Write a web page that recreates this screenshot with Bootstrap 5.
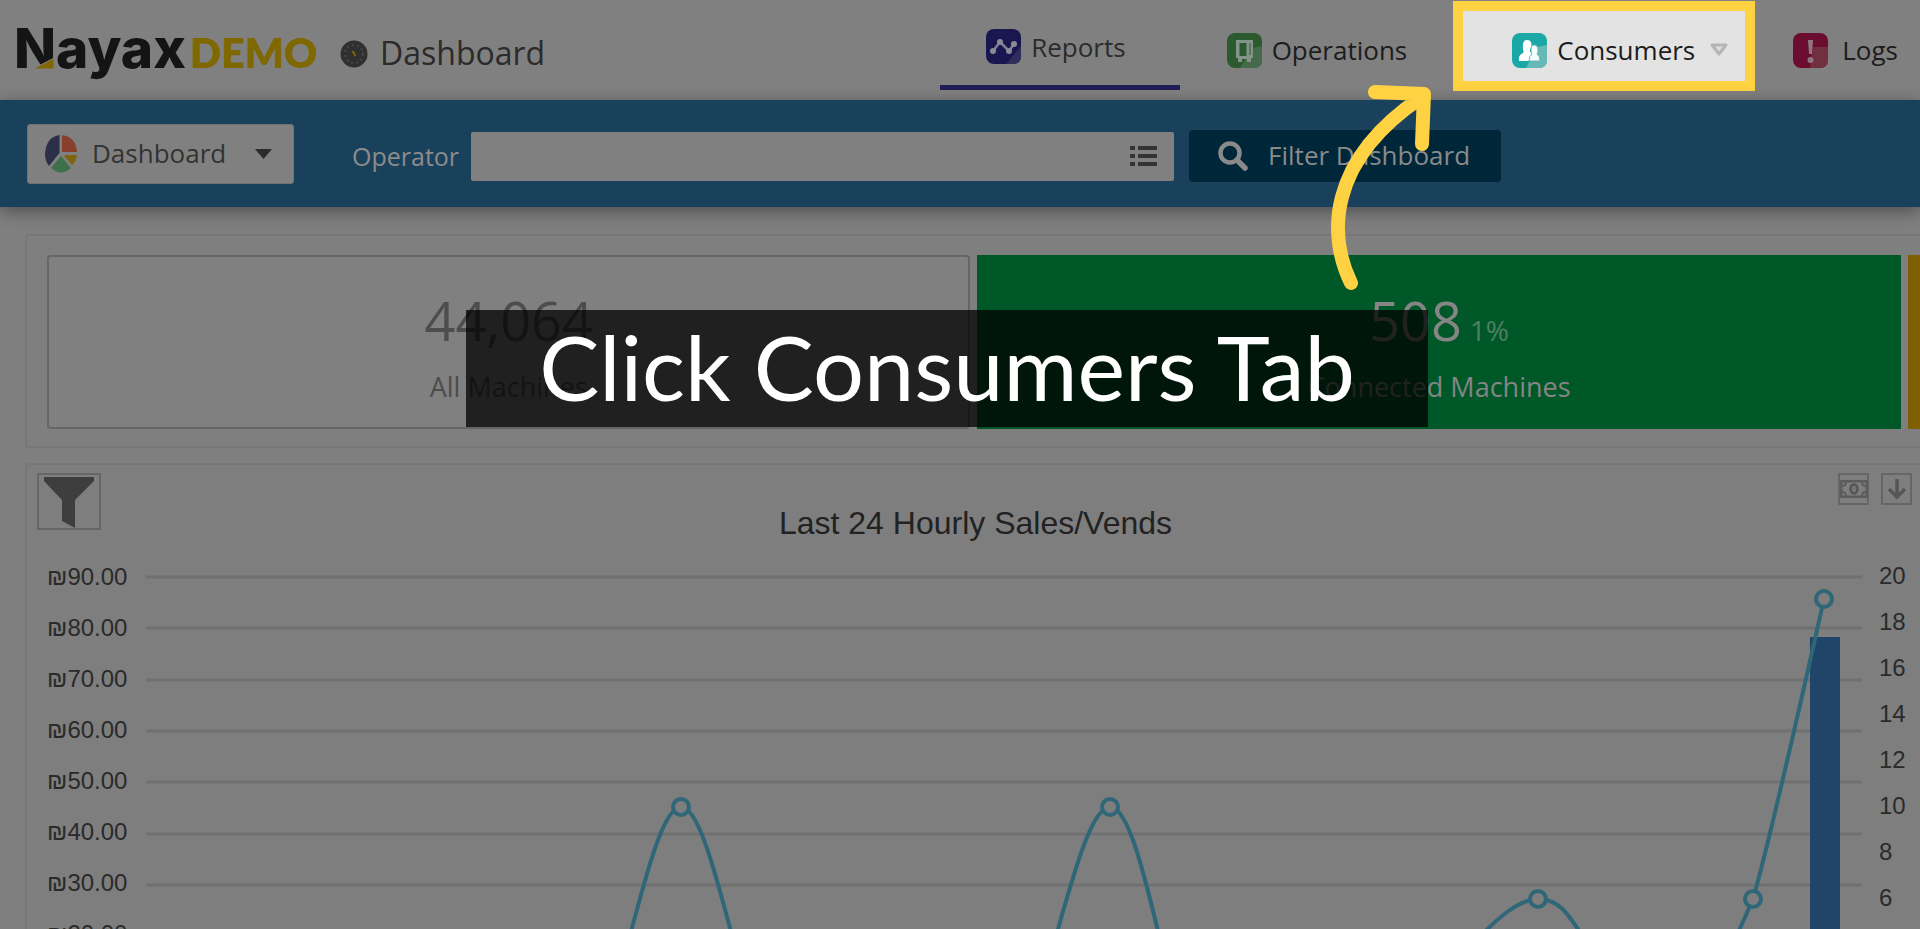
<!DOCTYPE html>
<html lang="en">
<head>
<meta charset="utf-8">
<meta name="viewport" content="width=device-width, initial-scale=1">
<title>Nayax Demo - Dashboard</title>
<link href="https://cdn.jsdelivr.net/npm/bootstrap@5.3.0/dist/css/bootstrap.min.css" rel="stylesheet">
<style>
  body { background: #7f7f7f; color: #2b2b2b; font-family: "Open Sans", "Noto Sans", sans-serif; font-size: 26px; line-height: 36px; }
  .topbar { height: 100px; background: #808080; padding-left: 16px; padding-right: 22px; }
  .brand { overflow: visible; }
  .topbar .nav-item-link { color: #1c1c1c; gap: 10px; height: 90px; padding-top: 10px; text-decoration: none; }
  .topbar .tab-reports { padding: 8px 54px 0 46px; border-bottom: 5px solid #211e57; color: #2b2b2b; }
  .topbar .tab-operations { padding-left: 47px; }
  .topbar .tab-consumers { margin: 1px 0 0 46px; width: 302px; padding: 8px 0 0 49px; background: #e3e3e3; border: 10px solid #ffd243; }
  .topbar .tab-logs { margin-left: 38px; gap: 14px; }
  .title-group { height: 100px; padding-left: 18px; gap: 12px; }
  .page-title { font-size: 32px; line-height: 40px; margin: 0; font-weight: 400; padding-top: 5px; }
  .filterbar { height: 107px; background: #1a415b; box-shadow: 0 4px 16px rgba(0,0,0,.4); padding-left: 27px; position: relative; }
  .view-btn { width: 267px; height: 60px; gap: 15px; padding: 0 20px 0 17px; background: #808080; border: 1px solid #6d7478; border-radius: 3px; color: #333; font-size: 26px; }
  .view-btn:hover { background: #808080; }
  .op-label { color: #8c8c8c; font-size: 25px; margin-left: 58px; padding-top: 4px; }
  .op-field { width: 703px; height: 49px; margin-left: 12px; background: #808080; margin-top: 5px; border-radius: 2px; }
  .op-field input { background: transparent; border: 0; box-shadow: none; }
  .filter-btn { width: 312px; height: 52px; margin-left: 15px; margin-top: 4px; background: #00263a; border: 0; border-radius: 4px; color: #8a8a8a; font-size: 26px; padding: 0 0 0 29px; gap: 20px; }
  main { padding: 27px 0 0 25px; }
  .panel { border: 2px solid #777; border-right: 0; border-radius: 4px 0 0 4px; background: #7f7f7f; }
  .tiles { padding: 19px 0 17px 20px; gap: 7px; }
  .tile { flex: 0 0 49.3%; height: 174px; border: 2px solid #666; border-radius: 4px; background: #808080; color: #4d4d4d; text-align: center; padding-top: 31px; font-size: 27px; }
  .tile .count { font-size: 54px; line-height: 64px; height: 64px; }
  .tile .pct { font-size: 28px; line-height: 1; color: #4f8062; margin-left: -6px; }
  .tile .caption { margin-top: 17px; }
  .tile-ok { background: #005828; border: 0; border-radius: 0; color: #858585; padding-top: 33px; }
  .tile-warn { background: #7f6000; border: 0; border-radius: 0; }
  .chart-panel { margin-top: 15px; font-family: "Liberation Sans", Arial, sans-serif; background: #7e7e7e; padding-top: 8px; }
  .tool { background: transparent; border: 2px solid #666; padding: 0; line-height: 0; }
  .tool-funnel { width: 64px; height: 57px; margin-left: 10px; }
  .tool-sm { width: 31px; height: 32px; }
  .chart-title { font-size: 32px; line-height: 40px; margin: 0; font-weight: 400; color: #222; padding: 30px 0 8px 12px; }
  .axis { font-size: 24px; color: #2a2a2a; }
  .axis-left { width: 119px; padding-left: 20px; }
  .axis-left div { height: 51px; line-height: 51px; }
  .axis-right { width: 58px; padding: 2px 0 0 17px; }
  .axis-right div { height: 46px; line-height: 46px; }
  .plot { height: 460px; min-width: 0; }
  .callout { left: 466px; top: 310px; width: 962px; height: 117px; background: rgba(0,0,0,.75); color: #fff; font-family: Lato, sans-serif; font-size: 90px; line-height: 112px; white-space: nowrap; z-index: 3; }
  .arrow { left: 1320px; top: 75px; z-index: 4; pointer-events: none; }
</style>
</head>
<body class="vh-100 overflow-hidden position-relative d-flex flex-column">

<header class="topbar d-flex align-items-start flex-shrink-0">
  <svg width="306" height="90" viewBox="16 0 306 90" role="img" aria-label="Nayax Demo" class="brand flex-shrink-0">
    <text x="14" y="68" font-family="Inter, sans-serif" font-weight="800" font-size="55" fill="#141414">Nayax</text>
    <path d="M33 69 54 58V69Z" fill="#7f6800" stroke="#808080" stroke-width="1"/>
    <text x="190" y="68" font-family="Lato, sans-serif" font-weight="800" font-size="41" fill="#7f6800">DEMO</text>
  </svg>
  <div class="title-group d-flex align-items-center flex-shrink-0">
    <svg width="28" height="28" viewBox="0 0 28 28" class="mt-2" aria-hidden="true">
      <circle cx="14" cy="14" r="13.500" fill="#303030"/>
      <circle cx="14" cy="14" r="9" fill="none" stroke="#484848" stroke-width="2" stroke-dasharray="2 3"/>
      <path d="m12.500 11 3 5" stroke="#7f6800" stroke-width="2"/>
    </svg>
    <h1 class="page-title">Dashboard</h1>
  </div>
  <nav class="d-flex ms-auto flex-shrink-0" aria-label="Main">
    <a href="#" class="nav-item-link tab-reports d-flex align-items-center">
      <svg width="35" height="35" viewBox="0 0 35 35"><rect width="35" height="35" rx="8" fill="#191650"/><path d="M20 35 35 17v10q0 8-8 8Z" fill="#302c5c"/><path d="M7 22 14 13 23 22 28 15" fill="none" stroke="#808090" stroke-width="2.500"/><g fill="#8b8b98"><circle cx="7" cy="22" r="3"/><circle cx="14" cy="13" r="3"/><circle cx="23" cy="22" r="3"/><circle cx="28" cy="15" r="3"/></g></svg>
      Reports</a>
    <a href="#" class="nav-item-link tab-operations d-flex align-items-center">
      <svg width="35" height="35" viewBox="0 0 35 35"><rect width="35" height="35" rx="8" fill="#2b5a2f"/><path d="M25 15 35 13v14q0 8-8 8H13Z" fill="#45694a"/><path d="M9 7h17v18h-2v4h-4v-3h-5v3h-4v-4h-2Z" fill="#83958a"/><path d="M12.500 10h7v13h-7Z" fill="#2b5a2f"/><path d="M23 10v12" stroke="#5b7561" stroke-width="2"/></svg>
      Operations</a>
    <a href="#" class="nav-item-link tab-consumers d-flex align-items-center" aria-current="page">
      <svg width="35" height="35" viewBox="0 0 35 35"><rect width="35" height="35" rx="8" fill="#19a8a6"/><path d="M25 14 35 12v15q0 8-8 8H14Z" fill="#67b9b8"/><path d="M15 7q5 0 4.500 6l-2 5 4 4v6H7v-3q0-3 4-5 1-1 0-4-1-9 4-9Z" fill="#fff"/><path d="M22 12q4 0 4 5 0 3-1 4 3 2 3 7H17q0-5 3-7-1-1-1-4 0-5 3-5Z" fill="#f6ffff" stroke="#67b9b8"/></svg>
      Consumers
      <svg width="20" height="16" viewBox="0 0 20 16" class="ms-1" aria-hidden="true"><path d="M3 3H17L10 12Z" fill="#ddd" stroke="#b5b5b5" stroke-width="3" stroke-linejoin="round"/></svg></a>
    <a href="#" class="nav-item-link tab-logs d-flex align-items-center">
      <svg width="35" height="35" viewBox="0 0 35 35"><rect width="35" height="35" rx="8" fill="#6b0d2f"/><path d="M20 14H35v13q0 8-8 8H17Z" fill="#713040"/><path d="M15 7h5l-1 14h-3Z" fill="#8d7880"/><circle cx="17.500" cy="27" r="3" fill="#8d7880"/></svg>
      Logs</a>
  </nav>
</header>

<div class="filterbar d-flex align-items-center flex-shrink-0">
  <button type="button" class="view-btn btn d-flex align-items-center flex-shrink-0">
    <svg width="32" height="38" viewBox="0 0 32 38" aria-hidden="true"><path d="M14.500 0V18L4 31Q0 26 0 19 1 2 14.500 0Z" fill="#2c2f48"/><path d="M17 0Q31 2 32 17H17Z" fill="#88402d"/><path d="M21 20H32Q31 27 27 30L19 21Z" fill="#7f6510"/><path d="M16 21 26 33Q16 42 6 33Z" fill="#3e7049"/></svg>
    <span>Dashboard</span>
    <svg width="18" height="12" viewBox="0 0 18 12" class="ms-auto" aria-hidden="true"><path d="M0 1H17L8.500 11Z" fill="#2b2b2b"/></svg>
  </button>
  <label for="operator" class="op-label">Operator</label>
  <div class="op-field d-flex align-items-center flex-shrink-0">
    <input id="operator" type="text" class="form-control flex-grow-1">
    <svg width="28" height="24" viewBox="0 0 28 24" class="me-3 flex-shrink-0" aria-hidden="true"><path d="M0 4H5M0 12H5M0 20H5M8 4H27M8 12H27M8 20H27" stroke="#333" stroke-width="4"/></svg>
  </div>
  <button type="button" class="filter-btn btn d-flex align-items-center flex-shrink-0">
    <svg width="30" height="30" viewBox="0 0 30 30" aria-hidden="true"><circle cx="12" cy="12" r="9.500" fill="none" stroke="#8a8a8a" stroke-width="4.500"/><path d="m19 19 8 8" stroke="#8a8a8a" stroke-width="5.500" stroke-linecap="round"/></svg>
    Filter Dashboard
  </button>
</div>

<main class="flex-grow-1 overflow-hidden">
  <section class="panel tiles d-flex overflow-hidden">
    <div class="tile">
      <div class="count">44,064</div>
      <div class="caption">All Machines</div>
    </div>
    <div class="tile tile-ok">
      <div class="count">508 <span class="pct">1%</span></div>
      <div class="caption">Connected Machines</div>
    </div>
    <div class="tile tile-warn"></div>
  </section>

  <section class="panel chart-panel">
    <div class="d-flex align-items-start">
      <button type="button" class="tool tool-funnel" aria-label="Filter chart">
        <svg width="52" height="53" viewBox="0 0 52 53"><path d="M1 2H51V6L32 25V53L19 46V25L1 6Z" fill="#3e3e3e"/></svg>
      </button>
      <h2 class="chart-title flex-grow-1 text-center">Last 24 Hourly Sales/Vends</h2>
      <div class="d-flex gap-2 pe-2">
        <button type="button" class="tool tool-sm me-1" aria-label="Money view">
          <svg width="28" height="18" viewBox="0 0 28 18"><path d="M1 1H27V17H1Z" fill="none" stroke="#5c5c5c" stroke-width="3"/><path d="M2 6Q6 6 6 2M22 2q0 4 4 4M2 12q4 0 4 4M22 16q0-4 4-4" fill="none" stroke="#5c5c5c" stroke-width="2"/><ellipse cx="14" cy="9" rx="3.500" ry="4.500" fill="#777" stroke="#555" stroke-width="2.500"/></svg>
        </button>
        <button type="button" class="tool tool-sm" aria-label="Download">
          <svg width="20" height="22" viewBox="0 0 20 22"><path d="M10 1V18M2 11 10 19 18 11" fill="none" stroke="#565656" stroke-width="3.500"/></svg>
        </button>
      </div>
    </div>
    <div class="axis d-flex">
      <div class="axis-left flex-shrink-0">
        <div>₪90.00</div><div>₪80.00</div><div>₪70.00</div><div>₪60.00</div><div>₪50.00</div><div>₪40.00</div><div>₪30.00</div><div>₪20.00</div>
      </div>
      <svg class="plot flex-grow-1" viewBox="0 0 1716 460" preserveAspectRatio="none" role="img" aria-label="Hourly sales and vends">
        <path d="M0 26H1716M0 77H1716M0 129H1716M0 180H1716M0 231H1716M0 283H1716M0 334H1716M0 385H1716" stroke="#707070" stroke-width="3"/>
        <rect x="1664" y="86" width="30" height="374" fill="#204568"/>
        <g fill="none" stroke="#2f6779" stroke-width="4">
          <path d="M461 460C485 400 509 256 535 256S585 400 609 460"/>
          <path d="M886 460C911 400 937 256 964 256S1012 400 1034 460"/>
          <path d="M1320 400C1350 368 1372 348 1392 348S1420 358 1446 400"/>
          <path d="M1584 400 1607 348C1625 285 1655 150 1678 48"/>
          <g fill="#7e7e7e"><circle cx="535" cy="256" r="8"/><circle cx="964" cy="256" r="8"/><circle cx="1392" cy="348" r="8"/><circle cx="1607" cy="348" r="8"/><circle cx="1678" cy="48" r="8"/></g>
        </g>
      </svg>
      <div class="axis-right flex-shrink-0">
        <div>20</div><div>18</div><div>16</div><div>14</div><div>12</div><div>10</div><div>8</div><div>6</div>
      </div>
    </div>
  </section>
</main>

<div class="callout position-absolute text-center">Click Consumers Tab</div>
<svg class="arrow position-absolute" width="125" height="225" viewBox="1320 75 125 225" aria-hidden="true">
  <path d="M1351 283C1329 238 1325 162 1422 97M1375 92 1424 94 1422 144" fill="none" stroke="#ffd243" stroke-width="14" stroke-linecap="round" stroke-linejoin="round"/>
</svg>

<script src="https://cdn.jsdelivr.net/npm/bootstrap@5.3.0/dist/js/bootstrap.bundle.min.js"></script>
</body>
</html>
